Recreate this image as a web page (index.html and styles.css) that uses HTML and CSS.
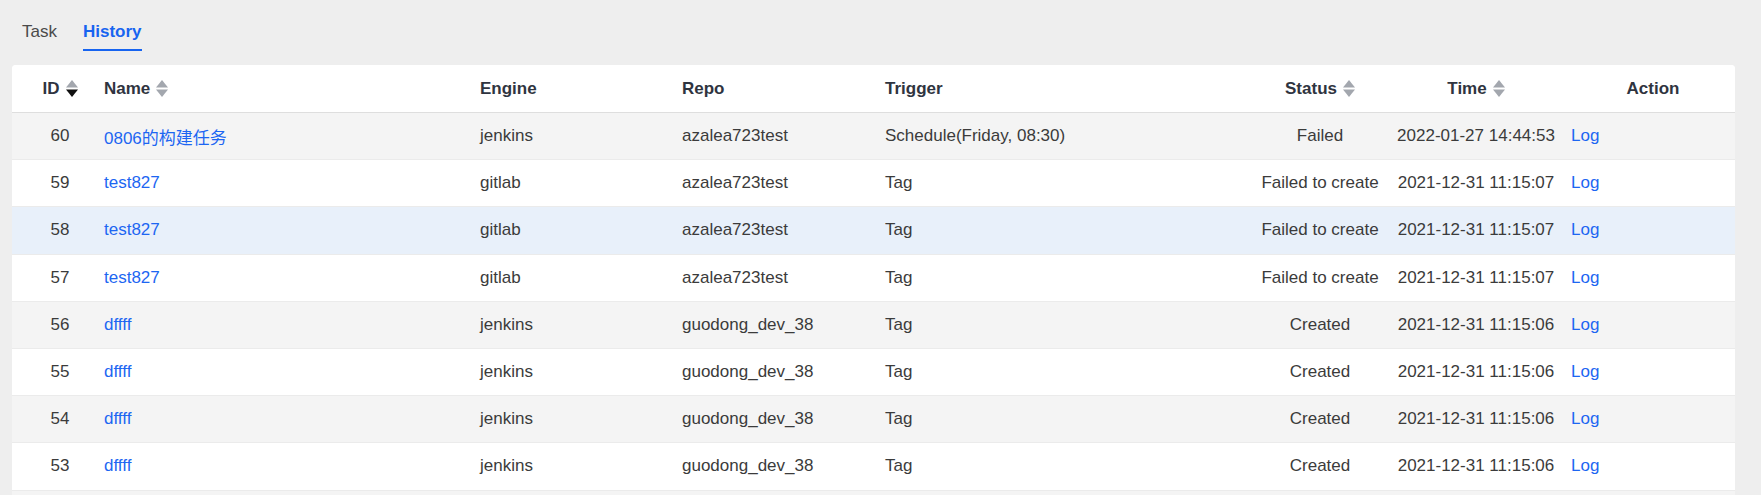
FILE: index.html
```html
<!DOCTYPE html>
<html lang="en">
<head>
<meta charset="utf-8">
<title>History</title>
<link rel="stylesheet" href="styles.css">
</head>
<body>
<div class="page">
  <nav class="tabs">
    <span class="tab">Task</span>
    <span class="tab active">History</span>
  </nav>
  <section class="card">
    <div class="row head">
      <div class="cell c-id center"><span class="th">ID</span><svg class="sort" viewBox="0 0 12 17" width="12" height="17"><polygon points="6,0 12,7.5 0,7.5" fill="#a3a7ae"/><polygon points="0,9.5 12,9.5 6,17" fill="#111"/></svg></div>
      <div class="cell c-name"><span class="th">Name</span><svg class="sort" viewBox="0 0 12 17" width="12" height="17"><polygon points="6,0 12,7.5 0,7.5" fill="#a3a7ae"/><polygon points="0,9.5 12,9.5 6,17" fill="#a3a7ae"/></svg></div>
      <div class="cell"><span class="th">Engine</span></div>
      <div class="cell"><span class="th">Repo</span></div>
      <div class="cell"><span class="th">Trigger</span></div>
      <div class="cell center"><span class="th">Status</span><svg class="sort" viewBox="0 0 12 17" width="12" height="17"><polygon points="6,0 12,7.5 0,7.5" fill="#a3a7ae"/><polygon points="0,9.5 12,9.5 6,17" fill="#a3a7ae"/></svg></div>
      <div class="cell center"><span class="th">Time</span><svg class="sort" viewBox="0 0 12 17" width="12" height="17"><polygon points="6,0 12,7.5 0,7.5" fill="#a3a7ae"/><polygon points="0,9.5 12,9.5 6,17" fill="#a3a7ae"/></svg></div>
      <div class="cell center"><span class="th">Action</span></div>
    </div>

    <div class="row stripe">
      <div class="cell c-id center">60</div>
      <div class="cell c-name"><a class="link">0806的构建任务</a></div>
      <div class="cell">jenkins</div>
      <div class="cell">azalea723test</div>
      <div class="cell">Schedule(Friday, 08:30)</div>
      <div class="cell center">Failed</div>
      <div class="cell center">2022-01-27 14:44:53</div>
      <div class="cell"><a class="link">Log</a></div>
    </div>
    <div class="row">
      <div class="cell c-id center">59</div>
      <div class="cell c-name"><a class="link">test827</a></div>
      <div class="cell">gitlab</div>
      <div class="cell">azalea723test</div>
      <div class="cell">Tag</div>
      <div class="cell center">Failed to create</div>
      <div class="cell center">2021-12-31 11:15:07</div>
      <div class="cell"><a class="link">Log</a></div>
    </div>
    <div class="row hover">
      <div class="cell c-id center">58</div>
      <div class="cell c-name"><a class="link">test827</a></div>
      <div class="cell">gitlab</div>
      <div class="cell">azalea723test</div>
      <div class="cell">Tag</div>
      <div class="cell center">Failed to create</div>
      <div class="cell center">2021-12-31 11:15:07</div>
      <div class="cell"><a class="link">Log</a></div>
    </div>
    <div class="row">
      <div class="cell c-id center">57</div>
      <div class="cell c-name"><a class="link">test827</a></div>
      <div class="cell">gitlab</div>
      <div class="cell">azalea723test</div>
      <div class="cell">Tag</div>
      <div class="cell center">Failed to create</div>
      <div class="cell center">2021-12-31 11:15:07</div>
      <div class="cell"><a class="link">Log</a></div>
    </div>
    <div class="row stripe">
      <div class="cell c-id center">56</div>
      <div class="cell c-name"><a class="link">dffff</a></div>
      <div class="cell">jenkins</div>
      <div class="cell">guodong_dev_38</div>
      <div class="cell">Tag</div>
      <div class="cell center">Created</div>
      <div class="cell center">2021-12-31 11:15:06</div>
      <div class="cell"><a class="link">Log</a></div>
    </div>
    <div class="row">
      <div class="cell c-id center">55</div>
      <div class="cell c-name"><a class="link">dffff</a></div>
      <div class="cell">jenkins</div>
      <div class="cell">guodong_dev_38</div>
      <div class="cell">Tag</div>
      <div class="cell center">Created</div>
      <div class="cell center">2021-12-31 11:15:06</div>
      <div class="cell"><a class="link">Log</a></div>
    </div>
    <div class="row stripe">
      <div class="cell c-id center">54</div>
      <div class="cell c-name"><a class="link">dffff</a></div>
      <div class="cell">jenkins</div>
      <div class="cell">guodong_dev_38</div>
      <div class="cell">Tag</div>
      <div class="cell center">Created</div>
      <div class="cell center">2021-12-31 11:15:06</div>
      <div class="cell"><a class="link">Log</a></div>
    </div>
    <div class="row">
      <div class="cell c-id center">53</div>
      <div class="cell c-name"><a class="link">dffff</a></div>
      <div class="cell">jenkins</div>
      <div class="cell">guodong_dev_38</div>
      <div class="cell">Tag</div>
      <div class="cell center">Created</div>
      <div class="cell center">2021-12-31 11:15:06</div>
      <div class="cell"><a class="link">Log</a></div>
    </div>
    <div class="row stripe tail"></div>
  </section>
</div>
</body>
</html>
```

FILE: styles.css
```css
html, body {
  margin: 0;
  padding: 0;
  background: #eeeeee;
  overflow: hidden;
}

body {
  font-family: "Liberation Sans", Arial, "Noto Sans CJK SC", sans-serif;
  font-size: 17px;
  color: #3b3b3b;
}

.page {
  padding: 22px 26px 0 12px;
}

.tabs {
  display: flex;
  gap: 26px;
  padding-left: 10px;
  margin-bottom: 14px;
}

.tab {
  line-height: 20px;
  padding-bottom: 7px;
  border-bottom: 2px solid transparent;
  color: #4a4a4a;
}

.tab.active {
  color: #1764f0;
  font-weight: bold;
  border-bottom-color: #1764f0;
}

.card {
  background: #ffffff;
  border-radius: 4px;
  overflow: hidden;
  width: 1723px;
}

.row {
  display: grid;
  grid-template-columns: 92px 376px 202px 203px 374px 122px 190px 164px;
  height: 46.2px;
  border-bottom: 1px solid #ebebeb;
  background: #ffffff;
}

.row.head {
  height: 47px;
  border-bottom-color: #dedede;
}

.row.stripe {
  background: #f4f4f4;
}

.row.hover {
  background: #e8f0fa;
}

.row.tail {
  height: 8px;
  border-bottom: 0;
}

.cell {
  display: flex;
  align-items: center;
  white-space: nowrap;
  min-width: 0;
}

.cell.center {
  justify-content: center;
}

.c-id {
  padding-left: 4px;
}

.th {
  font-weight: bold;
  color: #2f3440;
}

.sort {
  margin-left: 6px;
  flex: none;
}

.link {
  color: #1d66f2;
  text-decoration: none;
  cursor: pointer;
}
```
